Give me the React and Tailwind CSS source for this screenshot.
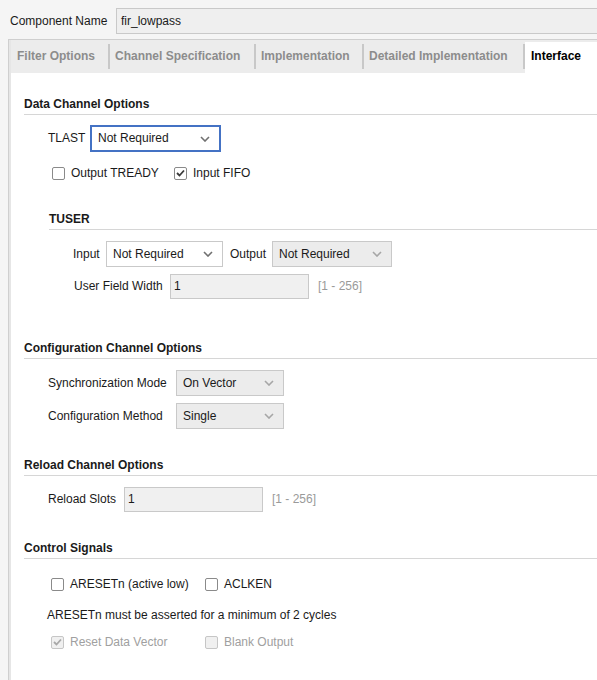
import React from 'react'

const font = { fontFamily: '"Liberation Sans", Arial, sans-serif' }

function Chevron({ muted }) {
  return (
    <svg width="10" height="6" viewBox="0 0 10 6" className="shrink-0">
      <polyline
        points="1,1 5,5 9,1"
        fill="none"
        stroke={muted ? '#a6a6a6' : '#707070'}
        strokeWidth="1.6"
      />
    </svg>
  )
}

function Combo({ value, width, focused, readOnly, height = 26 }) {
  const box = focused
    ? 'border-2 border-[#4472c4] bg-white pl-[6px]'
    : readOnly
      ? 'border border-[#c9c9c9] bg-[#ececec] pl-[6px]'
      : 'border border-[#c9c9c9] bg-white pl-[6px]'
  return (
    <div
      className={`flex shrink-0 items-center justify-between pr-[9px] text-[#1a1a1a] ${box}`}
      style={{ width, height }}
    >
      <span>{value}</span>
      <Chevron muted={readOnly} />
    </div>
  )
}

function Field({ value, width }) {
  return (
    <div
      className="flex h-[25px] shrink-0 items-center border border-[#c9c9c9] bg-[#f0f0f0] pl-[3px] text-[#1a1a1a]"
      style={{ width }}
    >
      {value}
    </div>
  )
}

function Check({ label, checked, disabled, width }) {
  return (
    <div className="flex items-center gap-[6px]" style={{ width }}>
      <div
        className={`flex h-[13px] w-[13px] items-center justify-center rounded-[2px] border ${
          disabled ? 'border-[#c6c6c6] bg-[#f0f0f0]' : 'border-[#8a8a8a] bg-white'
        }`}
      >
        {checked && (
          <svg width="9" height="8" viewBox="0 0 9 8">
            <polyline
              points="1,4 3.5,6.5 8,1.5"
              fill="none"
              stroke={disabled ? '#a8a8a8' : '#3a3a3a'}
              strokeWidth="1.8"
            />
          </svg>
        )}
      </div>
      <span className={disabled ? 'text-[#a0a0a0]' : 'text-[#1a1a1a]'}>{label}</span>
    </div>
  )
}

function Heading({ children, className = '' }) {
  return (
    <div className={`border-b border-[#d6d6d6] pb-[2px] font-bold leading-[15px] text-[#1a1a1a] ${className}`}>
      {children}
    </div>
  )
}

const tabs = [
  { name: 'Filter Options', w: 97 },
  { name: 'Channel Specification', w: 146 },
  { name: 'Implementation', w: 108 },
  { name: 'Detailed Implementation', w: 161 },
]

export default function App() {
  return (
    <div
      className="h-[680px] w-[597px] overflow-hidden bg-[#f5f5f5] text-[12px] leading-[15px] text-[#1a1a1a]"
      style={font}
    >
      {/* component name */}
      <div className="flex items-center pl-[10px] pt-[8px]">
        <span className="w-[106px]">Component Name</span>
        <div className="-mr-[2px] flex h-[26px] flex-1 items-center border border-[#c9c9c9] bg-[#efefef] pl-[4px]">
          fir_lowpass
        </div>
      </div>

      {/* tab panel */}
      <div className="ml-[8px] mt-[5px] h-[660px] border-l border-t border-[#cfcfcf]">
        <div className="h-full border-l-2 border-[#e6e6e6] bg-white">
          <div className="flex h-[33px] bg-[#ececec]">
            {tabs.map((t, i) => (
              <div key={t.name} className="flex items-center" style={{ width: t.w }}>
                {i > 0 && <div className="h-[25px] w-[2px] bg-[#c8c8c8]" />}
                <span className={`font-bold text-[#8c8c8c] ${i > 0 ? 'pl-[5px]' : 'pl-[6px]'}`}>
                  {t.name}
                </span>
              </div>
            ))}
            <div className="flex flex-1 items-center">
              <div className="h-[25px] w-[2px] bg-[#c8c8c8]" />
              <div className="mt-[2px] flex h-[31px] flex-1 items-center bg-white pb-[3px] pl-[6px] font-bold text-black">
                Interface
              </div>
            </div>
          </div>

          <div className="pl-[13px]">
            {/* data channel */}
            <Heading className="mt-[24px]">Data Channel Options</Heading>
            <div className="ml-[24px] mt-[10px] flex h-[27px] items-center">
              <span className="w-[42px]">TLAST</span>
              <Combo value="Not Required" width={131} height={27} focused />
            </div>
            <div className="ml-[28px] mt-[13px] flex h-[16px] items-center">
              <Check label="Output TREADY" width={122} />
              <Check label="Input FIFO" checked />
            </div>

            <div className="ml-[25px] mt-[31px]">
              <Heading>TUSER</Heading>
              <div className="ml-[24px] mt-[11px] flex h-[26px] items-center">
                <span className="w-[33px]">Input</span>
                <Combo value="Not Required" width={117} />
                <span className="w-[49px] shrink-0 pl-[7px]">Output</span>
                <Combo value="Not Required" width={120} readOnly />
              </div>
              <div className="ml-[25px] mt-[7px] flex h-[25px] items-center">
                <span className="w-[96px]">User Field Width</span>
                <Field value="1" width={139} />
                <span className="pl-[9px] text-[#9a9a9a]">[1 - 256]</span>
              </div>
            </div>

            {/* configuration */}
            <Heading className="mt-[42px]">Configuration Channel Options</Heading>
            <div className="ml-[24px] mt-[11px] flex h-[26px] items-center">
              <span className="w-[128px]">Synchronization Mode</span>
              <Combo value="On Vector" width={108} readOnly />
            </div>
            <div className="ml-[24px] mt-[7px] flex h-[26px] items-center">
              <span className="w-[128px]">Configuration Method</span>
              <Combo value="Single" width={108} readOnly />
            </div>

            {/* reload */}
            <Heading className="mt-[29px]">Reload Channel Options</Heading>
            <div className="ml-[24px] mt-[11px] flex h-[25px] items-center">
              <span className="w-[76px]">Reload Slots</span>
              <Field value="1" width={139} />
              <span className="pl-[9px] text-[#9a9a9a]">[1 - 256]</span>
            </div>

            {/* control signals */}
            <Heading className="mt-[29px]">Control Signals</Heading>
            <div className="ml-[27px] mt-[17px] flex h-[16px] items-center">
              <Check label="ARESETn (active low)" width={154} />
              <Check label="ACLKEN" />
            </div>
            <div className="ml-[23px] mt-[16px]">ARESETn must be asserted for a minimum of 2 cycles</div>
            <div className="ml-[27px] mt-[11px] flex h-[16px] items-center">
              <Check label="Reset Data Vector" width={154} checked disabled />
              <Check label="Blank Output" disabled />
            </div>
          </div>
        </div>
      </div>
    </div>
  )
}
